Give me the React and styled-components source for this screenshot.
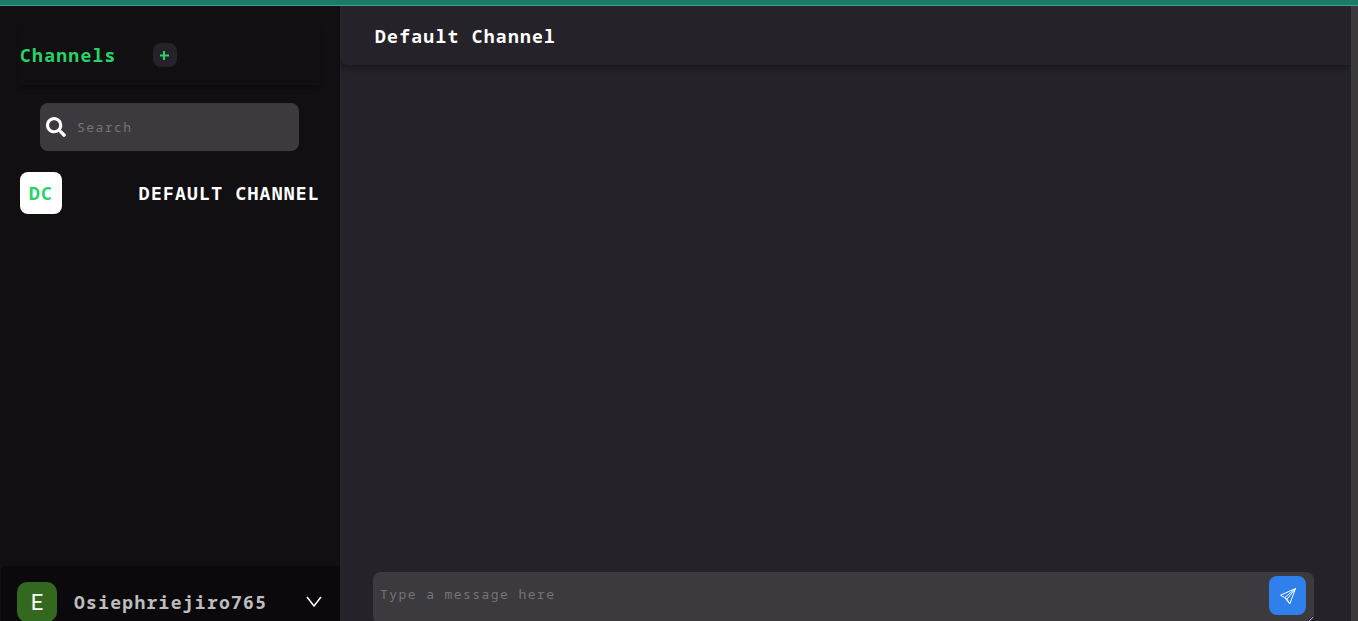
import React from "react";
import styled, { createGlobalStyle } from "styled-components";
import { FaSearch } from "react-icons/fa";

const Global = createGlobalStyle`
  *, *::before, *::after { box-sizing: border-box; }
  body { margin: 0; background: #252329; overflow: hidden; }
  body, input, textarea, button {
    font-family: "Noto Sans Mono", "DejaVu Sans Mono", monospace;
    letter-spacing: 0.08em;
  }
`;

const Page = styled.div`
  height: 100vh;
  display: flex;
  flex-direction: column;
  background: #252329;
`;

const TopBar = styled.div`
  flex: none;
  height: 6px;
  background: #1d7a68;
  border-bottom: 1px solid #4b9d8b;
`;

const Columns = styled.div`
  flex: 1;
  min-height: 0;
  display: flex;
`;

const Sidebar = styled.aside`
  flex: none;
  width: 340px;
  display: flex;
  flex-direction: column;
  background: #120f13;
`;

const ChannelsHeader = styled.header`
  height: 60px;
  margin: 19px 20px 18px;
  display: flex;
  align-items: center;
  gap: 36px;
  box-shadow: 0 4px 4px rgba(0, 0, 0, 0.25);
`;

const Title = styled.h2`
  margin: 0;
  font-size: 18px;
  line-height: 24px;
  font-weight: 700;
  color: ${(p) => p.$color || "#fff"};
`;

const AddButton = styled.button`
  width: 24px;
  height: 24px;
  padding: 0;
  border: 0;
  border-radius: 8px;
  display: grid;
  place-items: center;
  background: #252329;
`;

const SearchBox = styled.label`
  height: 48px;
  margin: 0 41px 0 40px;
  padding: 0 6px;
  display: flex;
  align-items: center;
  gap: 11px;
  border-radius: 8px;
  background: #3c393f;
  color: #fff;
`;

const SearchInput = styled.input`
  flex: 1;
  min-width: 0;
  padding: 0;
  border: 0;
  outline: 0;
  background: transparent;
  color: #fff;
  font-size: 13px;
  line-height: 20px;
  letter-spacing: 0.11em;
  &::placeholder { color: #757575; }
`;

const ChannelList = styled.nav`
  flex: 1;
  padding: 21px 20px 0;
`;

const ChannelLink = styled.a`
  display: flex;
  align-items: center;
  justify-content: space-between;
  color: #fff;
  font-size: 18px;
  line-height: 24px;
  font-weight: 700;
  text-decoration: none;
  text-transform: uppercase;
`;

const ChannelBadge = styled.span`
  width: 42px;
  height: 42px;
  display: grid;
  place-items: center;
  border-radius: 8px;
  background: #fff;
  color: #27d467;
`;

const UserBar = styled.footer`
  height: 55px;
  margin-left: 1px;
  padding: 16px 17px 0 16px;
  display: flex;
  align-items: flex-start;
  background: #0b090c;
  border-radius: 4px 4px 0 0;
`;

const Avatar = styled.span`
  width: 40px;
  height: 40px;
  flex: none;
  display: grid;
  place-items: center;
  border-radius: 10px;
  background: #33691e;
  color: #fff;
  font-family: Roboto, sans-serif;
  font-size: 22px;
  letter-spacing: 0;
`;

const UserName = styled.span`
  flex: 1;
  margin-left: 17px;
  font-size: 18px;
  line-height: 40px;
  font-weight: 700;
  color: #bdbdbd;
`;

const MenuButton = styled.button`
  width: 18px;
  height: 40px;
  padding: 0;
  border: 0;
  display: grid;
  place-items: center;
  background: transparent;
`;

const Main = styled.main`
  flex: 1;
  min-width: 0;
  display: flex;
  flex-direction: column;
`;

const MainHeader = styled.header`
  height: 59px;
  padding: 0 35px;
  display: flex;
  align-items: center;
  border-radius: 0 0 0 8px;
  box-shadow: 0 4px 4px rgba(0, 0, 0, 0.25);
`;

const Messages = styled.section`
  flex: 1;
`;

const Composer = styled.form`
  height: 49px;
  margin: 0 37px 0 33px;
  position: relative;
`;

const MessageInput = styled.textarea`
  display: block;
  width: 100%;
  height: 52px;
  padding: 12px 52px 0 7px;
  border: 0;
  outline: 0;
  border-radius: 8px;
  background: #3c393f;
  color: #fff;
  font-size: 13px;
  line-height: 20px;
  letter-spacing: 0.11em;
  &::placeholder { color: #757575; }
`;

const SendButton = styled.button`
  position: absolute;
  top: 4px;
  right: 8px;
  width: 37px;
  height: 39px;
  padding: 0;
  border: 0;
  border-radius: 8px;
  display: grid;
  place-items: center;
  background: #2f80ed;
`;

const ScrollTrack = styled.div`
  flex: none;
  width: 7px;
  background: #3a3a3c;
`;

export default function App() {
  return (
    <>
      <Global />
      <Page>
        <TopBar />
        <Columns>
          <Sidebar>
            <ChannelsHeader>
              <Title $color="#27d467">Channels</Title>
              <AddButton type="button" aria-label="Add channel">
                <svg width="12" height="12" viewBox="0 0 12 12" fill="none" stroke="#27d467" strokeWidth="2">
                  <path d="M5 2v9M1 6.5h9" />
                </svg>
              </AddButton>
            </ChannelsHeader>
            <SearchBox>
              <FaSearch size={20} aria-hidden="true" />
              <SearchInput type="text" placeholder="Search" aria-label="Search" />
            </SearchBox>
            <ChannelList>
              <ChannelLink href="#default">
                <ChannelBadge>DC</ChannelBadge>
                <span>Default Channel</span>
              </ChannelLink>
            </ChannelList>
            <UserBar>
              <Avatar>E</Avatar>
              <UserName>Osiephriejiro765</UserName>
              <MenuButton type="button" aria-label="User menu">
                <svg width="16" height="12" viewBox="0 0 16 12" fill="none" stroke="#fff" strokeWidth="1.5">
                  <path d="M1 1l7 9L15 1" />
                </svg>
              </MenuButton>
            </UserBar>
          </Sidebar>
          <Main>
            <MainHeader>
              <Title>Default Channel</Title>
            </MainHeader>
            <Messages />
            <Composer>
              <MessageInput placeholder="Type a message here" aria-label="Message" />
              <SendButton type="button" aria-label="Send">
                <svg width="18" height="18" viewBox="0 0 18 18" fill="none" stroke="#fff" strokeWidth="1" strokeLinejoin="round">
                  <path d="M16.5 1.5L1.5 8.2l4.2 2.4L10.8 17zM16.5 1.5L5.7 10.6M16.5 1.5L8 12.2M5.7 10.6L8 12.2l2.8 4.8" />
                </svg>
              </SendButton>
            </Composer>
          </Main>
          <ScrollTrack />
        </Columns>
      </Page>
    </>
  );
}
